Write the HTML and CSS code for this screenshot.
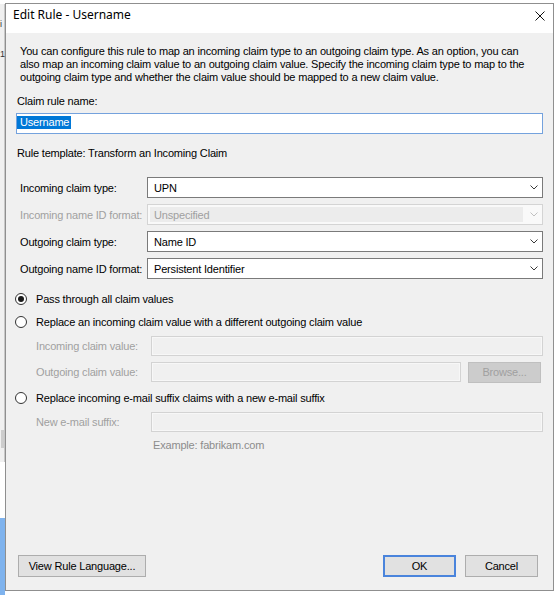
FILE: index.html
```html
<!DOCTYPE html>
<html>
<head>
<meta charset="utf-8">
<title>Edit Rule - Username</title>
<link rel="stylesheet" href="styles.css">
</head>
<body>
<div class="desktop">
  <div class="side">
    <div class="side-top"></div>
    <div class="side-mid">
      <span class="side-txt">i</span>
      <span class="side-txt second">1</span>
      <div class="side-thumb"></div>
    </div>
    <div class="side-white"></div>
    <div class="side-blue"></div>
  </div>
  <div class="dialog">
    <div class="titlebar">
      <span class="title">Edit Rule - Username</span>
      <svg class="close" width="10" height="10" viewBox="0 0 10 10"><path d="M0.5 0.5 L9.5 9.5 M9.5 0.5 L0.5 9.5" stroke="#111" stroke-width="1" fill="none"/></svg>
    </div>
    <div class="content">
      <p class="desc">You can configure this rule to map an incoming claim type to an outgoing claim type. As an option, you can<br>also map an incoming claim value to an outgoing claim value. Specify the incoming claim type to map to the<br>outgoing claim type and whether the claim value should be mapped to a new claim value.</p>
      <div class="lbl name-lbl">Claim rule name:</div>
      <div class="textbox name-box"><span class="sel">Username</span></div>
      <div class="lbl tmpl">Rule template: Transform an Incoming Claim</div>

      <div class="fields">
        <div class="frow">
          <span class="flabel">Incoming claim type:</span>
          <div class="combo"><span class="cval">UPN</span><svg class="chev" width="8" height="5" viewBox="0 0 8 5"><polyline points="0.5,0.5 4,4 7.5,0.5" fill="none" stroke="#3a3a3a" stroke-width="1"/></svg></div>
        </div>
        <div class="frow">
          <span class="flabel dim">Incoming name ID format:</span>
          <div class="combo disabled"><span class="cval">Unspecified</span><svg class="chev" width="8" height="5" viewBox="0 0 8 5"><polyline points="0.5,0.5 4,4 7.5,0.5" fill="none" stroke="#c0c0c0" stroke-width="1"/></svg></div>
        </div>
        <div class="frow">
          <span class="flabel">Outgoing claim type:</span>
          <div class="combo"><span class="cval">Name ID</span><svg class="chev" width="8" height="5" viewBox="0 0 8 5"><polyline points="0.5,0.5 4,4 7.5,0.5" fill="none" stroke="#3a3a3a" stroke-width="1"/></svg></div>
        </div>
        <div class="frow">
          <span class="flabel">Outgoing name ID format:</span>
          <div class="combo"><span class="cval">Persistent Identifier</span><svg class="chev" width="8" height="5" viewBox="0 0 8 5"><polyline points="0.5,0.5 4,4 7.5,0.5" fill="none" stroke="#3a3a3a" stroke-width="1"/></svg></div>
        </div>
      </div>

      <div class="opts">
        <div class="rrow"><span class="radio on"></span><span>Pass through all claim values</span></div>
        <div class="rrow r2"><span class="radio"></span><span>Replace an incoming claim value with a different outgoing claim value</span></div>
        <div class="subrow s1"><span class="sublabel">Incoming claim value:</span><div class="dbox wide"></div></div>
        <div class="subrow s2"><span class="sublabel">Outgoing claim value:</span><div class="dbox mid"></div><button class="btn browse">Browse...</button></div>
        <div class="rrow r3"><span class="radio"></span><span>Replace incoming e-mail suffix claims with a new e-mail suffix</span></div>
        <div class="subrow s3"><span class="sublabel">New e-mail suffix:</span><div class="dbox wide"></div></div>
        <div class="example">Example: fabrikam.com</div>
      </div>

      <div class="footer">
        <button class="btn view">View Rule Language...</button>
        <button class="btn ok">OK</button>
        <button class="btn cancel">Cancel</button>
      </div>
    </div>
  </div>
</div>
</body>
</html>
```

FILE: styles.css
```css
* { box-sizing: border-box; }
html, body { margin: 0; padding: 0; }
body {
  width: 556px;
  height: 595px;
  overflow: hidden;
  background: #ffffff;
  font-family: "Liberation Sans", Arial, sans-serif;
  font-size: 11px;
  letter-spacing: -0.18px;
  color: #000;
}
.desktop { display: flex; height: 595px; }

/* background window strip on the left */
.side { width: 5px; height: 595px; display: flex; flex-direction: column; }
.side-top { height: 4px; background: #fff; }
.side-mid {
  flex: 1;
  background: #f0f0f0;
  display: flex;
  flex-direction: column;
  border-right: 1px solid #c8c8c8;
}
.side-txt { margin: 14px 0 0 0; color: #333; line-height: 12px; font-size: 9px; }
.side-txt.second { margin-top: 18px; }
.side-thumb { margin: 370px 0 0 1px; width: 3px; height: 18px; background: #cdcdcd; }
.side-white { height: 56px; background: #fff; }
.side-blue { height: 77px; background: #7fb3ee; }

/* dialog */
.dialog {
  margin-top: 3px;
  width: 549px;
  height: 588px;
  border: 1px solid #8f8f8f;
  background: #f0f0f0;
  display: flex;
  flex-direction: column;
}
.titlebar {
  height: 29px;
  flex: none;
  background: #fff;
  display: flex;
  justify-content: space-between;
  align-items: flex-start;
  padding: 3px 8px 0 7px;
}
.title {
  font-family: "Noto Sans", "Open Sans", sans-serif;
  font-size: 12px;
  line-height: 16px;
  letter-spacing: 0;
  color: #000;
}
.close { margin-top: 4px; }

.content { flex: 1; display: flex; flex-direction: column; }
.desc { margin: 12px 0 0 14px; line-height: 13px; }
.lbl { line-height: 13px; margin-left: 11px; }
.name-lbl { margin-top: 11px; }
.textbox { height: 21px; border: 1px solid #7a7a7a; background: #fff; }
.name-box {
  margin: 5px 0 0 10px;
  width: 527px;
  border-color: #74a2dd;
  padding: 2px 0 0 0;
  display: flex;
}
.sel {
  display: inline-block;
  height: 13px;
  line-height: 13px;
  padding: 0 2px 0 3px;
  background: #0078d7;
  color: #fff;
}
.tmpl { margin-top: 13px; }

.fields { margin-top: 17px; display: flex; flex-direction: column; gap: 6px; }
.frow { display: flex; align-items: center; height: 21px; }
.flabel { width: 141px; padding-left: 14px; white-space: nowrap; }
.dim { color: #a0a0a0; }
.combo {
  width: 396px;
  height: 21px;
  border: 1px solid #7a7a7a;
  background: #fff;
  display: flex;
  align-items: center;
  padding-left: 6px;
}
.cval { flex: 1; }
.chev { margin-right: 4px; flex: none; }
.combo.disabled {
  border-color: #d4d4d4;
  background: #f9f9f9;
  padding: 2px;
  color: #a0a0a0;
  align-items: stretch;
}
.combo.disabled .cval {
  background: #ececec;
  display: flex;
  align-items: center;
  padding-left: 4px;
}
.combo.disabled .chev { margin: 0 2px 0 7px; align-self: center; }

.opts { margin-top: 12px; display: flex; flex-direction: column; }
.rrow { display: flex; align-items: center; height: 16px; margin-left: 9px; gap: 9px; }
.r2 { margin-top: 7px; }
.r3 { margin-top: 8px; }
.radio {
  width: 12px;
  height: 12px;
  border: 1px solid #333;
  border-radius: 50%;
  background: #fff;
  display: flex;
  align-items: center;
  justify-content: center;
  flex: none;
}
.radio.on::after {
  content: "";
  width: 6px;
  height: 6px;
  border-radius: 50%;
  background: #1a1a1a;
}
.subrow { display: flex; align-items: center; height: 20px; margin: 6px 0 0 30px; color: #a0a0a0; }
.sublabel { width: 115px; }
.dbox {
  height: 20px;
  border: 1px solid #d3d3d3;
  background: #f0f0f0;
  box-shadow: inset 0 0 0 1px #f7f7f7;
}
.wide { width: 392px; }
.mid { width: 310px; }

.btn {
  height: 22px;
  background: #e1e1e1;
  border: 1px solid #adadad;
  font-family: "Liberation Sans", Arial, sans-serif;
  font-size: 11px;
  letter-spacing: -0.18px;
  color: #000;
  padding: 0;
  margin: 0;
}
.browse {
  margin-left: 7px;
  width: 73px;
  height: 21px;
  background: #cccccc;
  border-color: #bfbfbf;
  color: #a0a0a0;
}
.example { margin: 7px 0 0 147px; line-height: 13px; color: #8c8c8c; }

.footer {
  margin-top: auto;
  display: flex;
  gap: 9px;
  padding: 0 15px 13px 12px;
}
.view { width: 128px; margin-right: auto; }
.ok { width: 73px; border: 2px solid #4a84dc; }
.cancel { width: 73px; }
```
